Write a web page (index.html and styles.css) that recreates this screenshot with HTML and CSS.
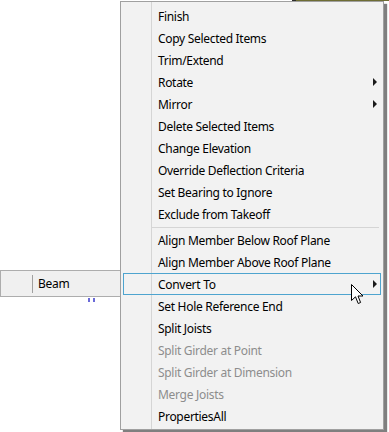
FILE: index.html
```html
<!DOCTYPE html>
<html>
<head>
<meta charset="utf-8">
<link rel="stylesheet" href="styles.css">
</head>
<body>
<div class="screen">
  <div class="top-strip"><span class="top-mark"></span></div>
  <div class="beam-box"><span class="beam-sep"></span><span class="beam-label">Beam</span></div>
  <div class="ticks"><span class="tick"></span><span class="tick"></span></div>

  <div class="menu">
    <div class="item">Finish</div>
    <div class="item">Copy Selected Items</div>
    <div class="item">Trim/Extend</div>
    <div class="item has-sub">Rotate<span class="arrow"></span></div>
    <div class="item has-sub">Mirror<span class="arrow"></span></div>
    <div class="item">Delete Selected Items</div>
    <div class="item">Change Elevation</div>
    <div class="item">Override Deflection Criteria</div>
    <div class="item">Set Bearing to Ignore</div>
    <div class="item">Exclude from Takeoff</div>
    <div class="separator"></div>
    <div class="item">Align Member Below Roof Plane</div>
    <div class="item">Align Member Above Roof Plane</div>
    <div class="item has-sub hot">Convert To<span class="arrow"></span></div>
    <div class="item">Set Hole Reference End</div>
    <div class="item">Split Joists</div>
    <div class="item disabled">Split Girder at Point</div>
    <div class="item disabled">Split Girder at Dimension</div>
    <div class="item disabled">Merge Joists</div>
    <div class="item">PropertiesAll</div>
  </div>

  <svg class="cursor" width="13" height="21" viewBox="0 0 13 21">
    <path d="M0.5 0.5 V16.5 L4.5 12.8 L7.2 19.5 L9.6 18.5 L7 12 H12 Z" fill="#fff" stroke="#000" stroke-width="1" stroke-linejoin="miter"/>
  </svg>
</div>
</body>
</html>
```
FILE: styles.css
```css
html, body {
  margin: 0;
  padding: 0;
  background: #ffffff;
}

.screen {
  position: relative;
  width: 389px;
  height: 432px;
  overflow: hidden;
  background: #ffffff;
  font-family: "Noto Sans", "Open Sans", sans-serif;
  font-size: 12px;
  letter-spacing: -0.3px;
  color: #000;
}

.top-strip {
  height: 1px;
  margin-left: 292px;
  background: #6e6d34;
  display: flex;
}

.top-mark {
  width: 4px;
  height: 1px;
  background: #2e2e2e;
}

.beam-box {
  margin-top: 269px;
  width: 121px;
  height: 27px;
  box-sizing: border-box;
  border: 1px solid #adadad;
  background: #f0f0f0;
  display: flex;
  align-items: center;
}

.beam-sep {
  width: 1px;
  height: 18px;
  margin-left: 31px;
  background: #a0a0a0;
}

.beam-label {
  margin-left: 5px;
}

.ticks {
  display: flex;
  gap: 3px;
  margin-left: 88px;
  margin-top: 1px;
}

.tick {
  width: 2px;
  height: 4px;
  background: #6a6ad8;
}

.menu {
  position: absolute;
  left: 120px;
  top: 1px;
  width: 264px;
  box-sizing: border-box;
  border: 1px solid #a0a0a0;
  padding: 3px 0 2px;
  display: flex;
  flex-direction: column;
  background:
    linear-gradient(to right, transparent 30px, #d5d5d5 30px, #d5d5d5 31px, transparent 31px),
    #f2f2f2;
  box-shadow: 3px 3px 1px rgba(0, 0, 0, 0.5);
}

.item {
  height: 22px;
  box-sizing: border-box;
  margin: 0 2px;
  border: 1px solid transparent;
  padding: 0 3px 0 34px;
  display: flex;
  align-items: center;
  white-space: nowrap;
}

.item.hot {
  border-color: #4ea4cf;
}

.item.disabled {
  color: #8d8d8d;
}

.arrow {
  margin-left: auto;
  width: 0;
  height: 0;
  border-top: 4px solid transparent;
  border-bottom: 4px solid transparent;
  border-left: 4px solid #1a1a1a;
}

.separator {
  height: 1px;
  background: #d5d5d5;
  margin: 2px 4px 1px 31px;
}

.cursor {
  position: absolute;
  left: 351px;
  top: 284px;
}
```
